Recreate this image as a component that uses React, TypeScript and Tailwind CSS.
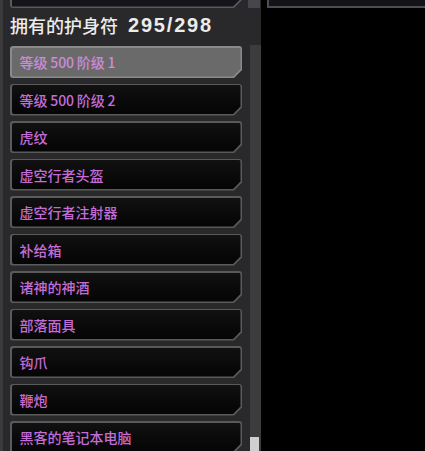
import React from 'react';

const items = [
  '等级 500 阶级 1',
  '等级 500 阶级 2',
  '虎纹',
  '虚空行者头盔',
  '虚空行者注射器',
  '补给箱',
  '诸神的神酒',
  '部落面具',
  '钩爪',
  '鞭炮',
  '黑客的笔记本电脑',
];

const font = { fontFamily: '"Noto Sans CJK SC", "Noto Sans", sans-serif' };

function Row({ label, selected }: { label: string; selected?: boolean }) {
  return (
    <div
      className={`shrink-0 h-[32px] p-[1.5px] rounded-[3px] [clip-path:polygon(0_0,100%_0,100%_calc(100%_-_8px),calc(100%_-_8px)_100%,0_100%)] ${
        selected ? 'bg-[#8a8a8a]' : 'bg-[#5a5a5a]'
      }`}
    >
      <div
        className={`h-full flex items-center pl-[8px] rounded-[2px] [clip-path:polygon(0_0,100%_0,100%_calc(100%_-_7.4px),calc(100%_-_7.4px)_100%,0_100%)] ${
          selected ? 'bg-[#6a6a6a]' : 'bg-gradient-to-b from-[#111112] to-[#050505]'
        }`}
      >
        <span
          className={`text-[14px] font-medium leading-none [word-spacing:-0.5px] ${
            selected ? 'text-[#cc8ada]' : 'text-[#c46cd6]'
          }`}
        >
          {label}
        </span>
      </div>
    </div>
  );
}

export default function App() {
  return (
    <div className="flex h-[451px] w-[425px] overflow-hidden bg-black" style={font}>
      <div className="w-[3px] shrink-0 bg-[#3b3b3d]" />

      <div className="w-[258px] shrink-0 flex flex-col bg-[#29292b]">
        {/* tail of the section above */}
        <div className="flex h-[8px] shrink-0">
          <div className="ml-[7px] w-[232px] h-[8px] overflow-hidden">
            <div className="-mt-[24px] h-[32px] p-[1.5px] bg-[#5a5a5a] rounded-[3px] [clip-path:polygon(0_0,100%_0,100%_calc(100%_-_8px),calc(100%_-_8px)_100%,0_100%)]">
              <div className="h-full bg-[#17141c] [clip-path:polygon(0_0,100%_0,100%_calc(100%_-_7.4px),calc(100%_-_7.4px)_100%,0_100%)]" />
            </div>
          </div>
          <div className="ml-[6px] w-[12px] bg-[#46464c]" />
        </div>

        <div className="h-[37px] shrink-0 flex items-center pl-[7px] pb-[3px] text-[#ececec]">
          <span className="text-[18px] font-medium leading-none">拥有的护身符</span>
          <span
            className="ml-[10px] text-[20px] font-bold leading-none tracking-[1.8px]"
            style={{ fontFamily: '"Liberation Sans", sans-serif' }}
          >
            295/298
          </span>
        </div>

        <div className="flex flex-1 min-h-0">
          <div className="ml-[7px] w-[232px] pt-[1px] flex flex-col gap-[5.5px] overflow-hidden">
            {items.map((it, i) => (
              <Row key={it} label={it} selected={i === 0} />
            ))}
          </div>
          <div className="ml-[8px] w-[11px] bg-[#3c3c3e] flex flex-col justify-end">
            <div className="h-[14px] w-[9px] bg-[#cfcfcf]" />
          </div>
        </div>
      </div>

      <div className="flex-1 bg-black">
        <div className="ml-[6px] h-[8px] border-l-2 border-b-2 border-[#4e4e52] bg-[#141318]" />
      </div>
    </div>
  );
}
